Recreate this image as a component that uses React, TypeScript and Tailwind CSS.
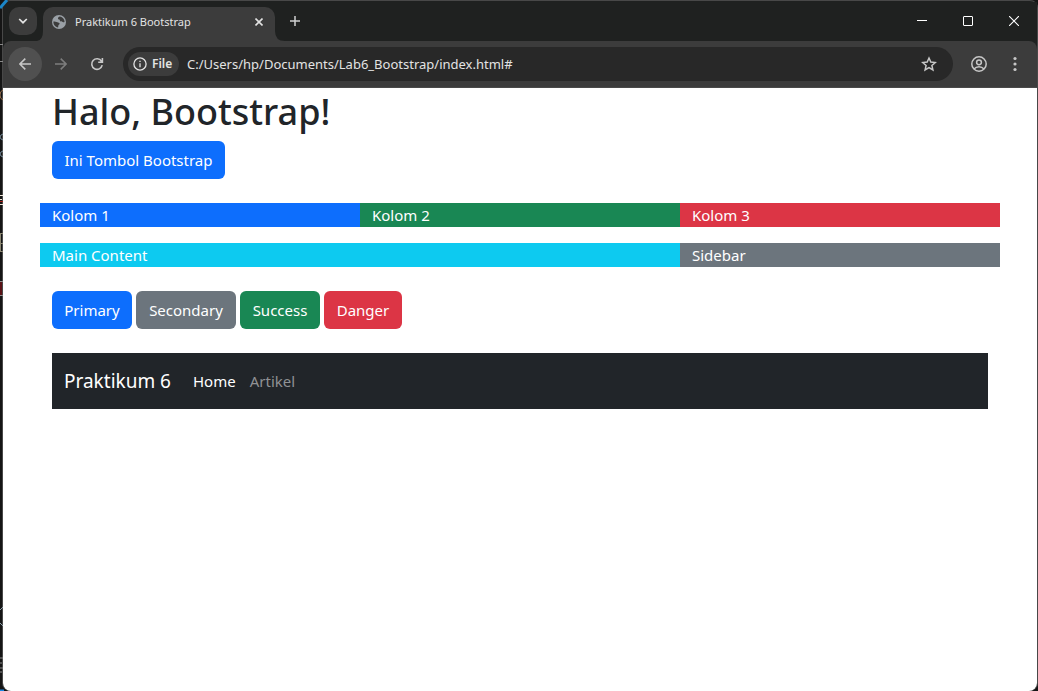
import React from "react";

const sans = "font-['Noto_Sans','Open_Sans',sans-serif]";

function Desktop() {
  return (
    <svg
      className="pointer-events-none absolute top-0 left-0"
      width="10"
      height="691"
      fill="none"
      aria-hidden="true"
    >
      <path d="M0 8L7 0" stroke="#1b86c8" strokeWidth="3" />
      <path d="M0 44.5h3M0 61.5h3" stroke="#8a8a8a" />
      <path d="M3 90q-3 1-3 5t3 5" stroke="#98714f" />
      <path d="M3 134q-3 1-3 3t3 3M3 151q-3 1-3 3t3 3" stroke="#7d93a3" />
      <path d="M0 195.5h3M0 199.5h2M0 204.5h3" stroke="#f0e6d8" />
      <path d="M0 201.5h3" stroke="#a3201c" />
      <path d="M0 233.5h3M0 243.5h3M0 251.5h3M.5 233v18" stroke="#8a8672" />
      <path d="M1 281v14" stroke="#5a1216" strokeWidth="2" />
      <path d="M0 281.5h3M0 295.5h3" stroke="#8d8d8d" />
      <path d="M0 610l3-3M0 623l3 3" stroke="#8fa0ab" />
      <path d="M0 658h3M0 663h2M0 668h3M0 672h2" stroke="#8d8d8d" />
      <path d="M0 690.5h4" stroke="#1b86e0" strokeWidth="2" />
    </svg>
  );
}

function TabStrip() {
  return (
    <div className="flex h-[39px] items-start bg-[#1f2120] pl-[6px]">
      <button
        aria-label="Search tabs"
        className="mt-[5px] flex h-7 w-7 items-center justify-center rounded-[10px] bg-[#3c3c3c]"
      >
        <svg width="10" height="6" viewBox="0 0 10 6" fill="none" stroke="#e3e3e3" strokeWidth="1.7">
          <path d="M1.2 1L5 4.7 8.8 1" />
        </svg>
      </button>
      <div className="flex h-[39px] items-end">
        <svg width="6" height="10" viewBox="0 0 6 10" fill="#3c3c3c" aria-hidden="true">
          <path d="M6 0v10H0Q6 9 6 0Z" />
        </svg>
        <div className="mt-[5px] flex h-[34px] w-[232px] items-center rounded-t-[10px] bg-[#3c3c3c] pr-2 pb-[5px] pl-[9px]">
          <svg width="14" height="14" viewBox="0 0 14 14" aria-hidden="true">
            <circle cx="7" cy="7" r="7" fill="#9aa0a6" />
            <path
              d="M8 1.4C6.6 1.8 6 2.2 6 3.4c0 .8.7.9 1.3 1.1.7.2.4 1.2 1 1.7.6.4 1.5 0 2 .6.5.5 1.2.4 2.3.1C12.5 4.2 10.8 2 8 1.4ZM1.4 6.5c1.4 0 3 .2 4 .8.9.5 2 .3 2.2 1.3.2.9-.9 1-1.2 1.7-.2.7 0 1.5-.3 2.2C3.4 12 1.3 9.6 1.4 6.5Z"
              fill="#3c3c3c"
            />
          </svg>
          <span className="ml-[9px] flex-1 text-[11px] leading-4 whitespace-nowrap text-[#e3e3e3]">
            Praktikum 6 Bootstrap
          </span>
          <button aria-label="Close tab" className="flex h-4 w-4 items-center justify-center">
            <svg width="8" height="8" viewBox="0 0 8 8" stroke="#e3e3e3" strokeWidth="1.6">
              <path d="M.5.5l7 7M7.5.5l-7 7" />
            </svg>
          </button>
        </div>
        <svg width="10" height="10" viewBox="0 0 10 10" fill="#3c3c3c" aria-hidden="true">
          <path d="M0 0v10h10Q0 10 0 0Z" />
        </svg>
      </div>
      <button aria-label="New tab" className="mt-[5px] flex h-7 w-5 items-center justify-center">
        <svg width="10" height="10" viewBox="0 0 10 10" stroke="#d0d0d0" strokeWidth="1.5">
          <path d="M5 0v10M0 5h10" />
        </svg>
      </button>
      <div className="ml-auto flex h-[38px]">
        <button aria-label="Minimize" className="flex w-[46px] items-center justify-center">
          <svg width="10" height="10" viewBox="0 0 10 10" stroke="#fff">
            <path d="M0 4.5h10" />
          </svg>
        </button>
        <button aria-label="Maximize" className="flex w-[46px] items-center justify-center">
          <svg width="10" height="10" viewBox="0 0 10 10" stroke="#fff" fill="none">
            <rect x=".5" y=".5" width="9" height="9" rx=".5" />
          </svg>
        </button>
        <button aria-label="Close" className="flex w-[46px] items-center justify-center">
          <svg width="10" height="10" viewBox="0 0 10 10" stroke="#fff" strokeWidth="1.1">
            <path d="M0 0l10 10M10 0L0 10" />
          </svg>
        </button>
      </div>
    </div>
  );
}

function Toolbar() {
  return (
    <div className="flex h-[47px] items-center rounded-t-lg border-b border-[#4a4a4a] bg-[#3c3c3c] pl-[5px]">
      <button
        aria-label="Back"
        className="flex h-[34px] w-[34px] items-center justify-center rounded-full bg-[#505050]"
      >
        <svg width="12" height="12" viewBox="0 0 12 12" stroke="#c7c7c7" strokeWidth="1.5" fill="none">
          <path d="M12 6H1M6.3.6L.9 6l5.4 5.4" />
        </svg>
      </button>
      <button aria-label="Forward" className="ml-[2px] flex h-[34px] w-[34px] items-center justify-center">
        <svg width="12" height="12" viewBox="0 0 12 12" stroke="#7d7d7d" strokeWidth="1.5" fill="none">
          <path d="M0 6h11M5.7.6L11.1 6l-5.4 5.4" />
        </svg>
      </button>
      <button aria-label="Reload" className="ml-[2px] flex h-[34px] w-[34px] items-center justify-center">
        <svg width="14" height="14" viewBox="0 0 14 14" stroke="#c7c7c7" strokeWidth="1.6" fill="none">
          <path d="M12.2 8.2A5.3 5.3 0 1 1 11.5 4.2M12.4 1v4.3H8.2" />
        </svg>
      </button>
      <div className="ml-[9px] flex h-[34px] flex-1 items-center rounded-full bg-[#282828] pr-4 pl-[5px]">
        <button className="flex h-6 w-[51px] items-center rounded-full bg-[#3c3c3c] pl-[5px] text-[12px] leading-4 font-semibold text-[#e3e3e3]">
          <svg width="14" height="14" viewBox="0 0 14 14" fill="none" stroke="#e3e3e3" strokeWidth="1.3">
            <circle cx="7" cy="7" r="6.1" />
            <path d="M7 6.2v4M7 3.7v1.4" />
          </svg>
          <span className="ml-[5px]">File</span>
        </button>
        <input
          aria-label="Address"
          readOnly
          value="C:/Users/hp/Documents/Lab6_Bootstrap/index.html#"
          className="ml-2 min-w-0 flex-1 bg-transparent text-[13px] leading-5 text-[#e3e3e3] outline-none"
        />
        <button aria-label="Bookmark this tab">
          <svg width="16" height="16" viewBox="0 0 16 16" fill="none" stroke="#c7c7c7" strokeWidth="1.5">
            <path d="M8 2l1.8 4.1 4.5.4-3.4 3 1 4.4L8 11.6l-3.9 2.3 1-4.4-3.4-3 4.5-.4Z" />
          </svg>
        </button>
      </div>
      <button aria-label="Profile" className="ml-[18px]">
        <svg width="16" height="16" viewBox="0 0 16 16" fill="none" stroke="#c7c7c7" strokeWidth="1.5">
          <circle cx="8" cy="8" r="7.2" />
          <circle cx="8" cy="6.3" r="2.4" />
          <path d="M3 13q2-2.3 5-2.3T13 13" />
        </svg>
      </button>
      <button aria-label="Menu" className="mr-5 ml-[26px]">
        <svg width="4" height="16" viewBox="0 0 4 16" fill="#c7c7c7">
          <circle cx="2" cy="2.5" r="1.6" />
          <circle cx="2" cy="8" r="1.6" />
          <circle cx="2" cy="13.5" r="1.6" />
        </svg>
      </button>
    </div>
  );
}

const btn = "h-[38px] rounded-md text-center text-[15px] leading-6 whitespace-nowrap text-white";

function Page() {
  return (
    <main className="flex-1 rounded-b-lg bg-white">
      <div className="mx-auto max-w-[960px] px-3">
        <h1 className="mb-[5px] text-[36px] leading-[48px] font-medium text-[#212529]">Halo, Bootstrap!</h1>
        <button className={`${btn} block w-[173px] bg-[#0d6efd]`}>Ini Tombol Bootstrap</button>
        <div className="-mx-3 mt-6 grid grid-cols-3 text-[15px] leading-6 text-white">
          <div className="bg-[#0d6efd] px-3">Kolom 1</div>
          <div className="bg-[#198754] px-3">Kolom 2</div>
          <div className="bg-[#dc3545] px-3">Kolom 3</div>
        </div>
        <div className="-mx-3 mt-4 grid grid-cols-3 text-[15px] leading-6 text-white">
          <div className="col-span-2 bg-[#0dcaf0] px-3">Main Content</div>
          <div className="bg-[#6c757d] px-3">Sidebar</div>
        </div>
        <div className="mt-6 flex gap-1">
          <button className={`${btn} w-20 bg-[#0d6efd]`}>Primary</button>
          <button className={`${btn} w-[100px] bg-[#6c757d]`}>Secondary</button>
          <button className={`${btn} w-20 bg-[#198754]`}>Success</button>
          <button className={`${btn} w-[78px] bg-[#dc3545]`}>Danger</button>
        </div>
        <nav className="mt-6 flex h-14 items-center bg-[#212529] px-3">
          <a href="#" className="mr-[22px] text-[19px] leading-[30px] text-white">
            Praktikum 6
          </a>
          <a href="#" className="mr-[14px] text-[15px] leading-6 text-white">
            Home
          </a>
          <a href="#" className="text-[15px] leading-6 text-[#909294]">
            Artikel
          </a>
        </nav>
      </div>
    </main>
  );
}

export default function App() {
  return (
    <div className={`relative flex min-h-screen bg-[#151515] pl-[2px] ${sans}`}>
      <div className="flex min-w-0 flex-1 flex-col rounded-t-lg rounded-b-lg border-x border-t border-[#484848] bg-[#1f2120] pt-px">
        <TabStrip />
        <Toolbar />
        <Page />
      </div>
      <Desktop />
    </div>
  );
}
